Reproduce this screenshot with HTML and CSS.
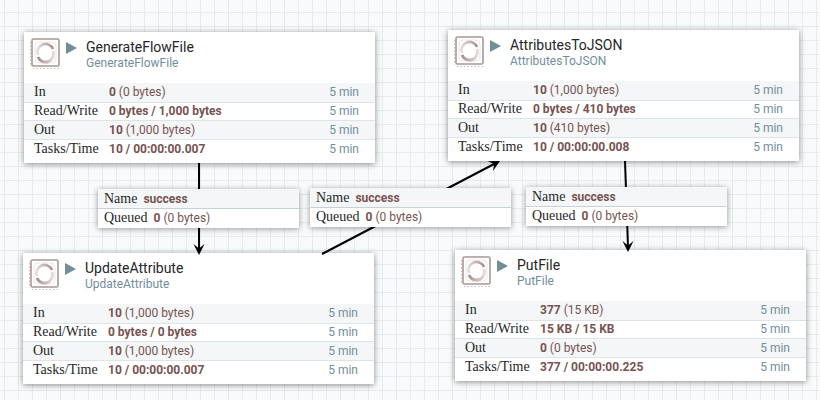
FILE: index.html
```html
<!DOCTYPE html>
<html lang="en">
<head>
	<meta charset="UTF-8">
	<title>Flow</title>
	<link rel="stylesheet" href="styles.css">
</head>
<body>
	<div class="canvas">
		<svg class="defs" width="0" height="0">
			<defs>
				<linearGradient id="arc1" x1="0" x2="1" y1="0" y2="0">
					<stop offset="0" stop-color="#a88f8e"/>
					<stop offset="1" stop-color="#e4dddc"/>
				</linearGradient>
				<linearGradient id="arc2" x1="0" x2="1" y1="0" y2="0">
					<stop offset="0" stop-color="#e4dddc"/>
					<stop offset="1" stop-color="#a88f8e"/>
				</linearGradient>
				<g id="chip">
					<path d="M0.5 4V29M3 30.5H29" fill="none" stroke="#c9bcbb" stroke-width="1" stroke-dasharray="1.5 2"/>
					<rect x="2" y="1" width="27" height="27" fill="#fff" stroke="#ab9796" stroke-width="1.6" rx="1.5"/>
					<rect x="5" y="4" width="21" height="21" fill="none" stroke="#ece7e7" stroke-width="1" rx="4"/>
					<path d="M8 17A8 8 0 0 1 23 11" fill="none" stroke="url(#arc2)" stroke-width="2.6"/>
					<path d="M23 13A8 8 0 0 1 8 19" fill="none" stroke="url(#arc1)" stroke-width="3"/>
				</g>
				<path id="head" d="M-5.5 -11 L0 0 L5.5 -11 L0 -6.5 Z" fill="#000"/>
			</defs>
		</svg>

		<div class="card pos-gen">
			<div class="head">
				<svg class="chip" viewBox="0 0 31 31"><use href="#chip"/></svg>
				<span class="play"></span>
				<div>
					<div class="title">GenerateFlowFile</div>
					<div class="sub">GenerateFlowFile</div>
				</div>
			</div>
			<div class="row"><span class="k">In</span><span class="v"><b>0</b> (0 bytes)</span><span class="t">5 min</span></div>
			<div class="row"><span class="k">Read/Write</span><span class="v"><b>0 bytes / 1,000 bytes</b></span><span class="t">5 min</span></div>
			<div class="row"><span class="k">Out</span><span class="v"><b>10</b> (1,000 bytes)</span><span class="t">5 min</span></div>
			<div class="row"><span class="k">Tasks/Time</span><span class="v"><b>10 / 00:00:00.007</b></span><span class="t">5 min</span></div>
		</div>

		<div class="card pos-json">
			<div class="head">
				<svg class="chip" viewBox="0 0 31 31"><use href="#chip"/></svg>
				<span class="play"></span>
				<div>
					<div class="title">AttributesToJSON</div>
					<div class="sub">AttributesToJSON</div>
				</div>
			</div>
			<div class="row"><span class="k">In</span><span class="v"><b>10</b> (1,000 bytes)</span><span class="t">5 min</span></div>
			<div class="row"><span class="k">Read/Write</span><span class="v"><b>0 bytes / 410 bytes</b></span><span class="t">5 min</span></div>
			<div class="row"><span class="k">Out</span><span class="v"><b>10</b> (410 bytes)</span><span class="t">5 min</span></div>
			<div class="row"><span class="k">Tasks/Time</span><span class="v"><b>10 / 00:00:00.008</b></span><span class="t">5 min</span></div>
		</div>

		<div class="card pos-upd">
			<div class="head">
				<svg class="chip" viewBox="0 0 31 31"><use href="#chip"/></svg>
				<span class="play"></span>
				<div>
					<div class="title">UpdateAttribute</div>
					<div class="sub">UpdateAttribute</div>
				</div>
			</div>
			<div class="row"><span class="k">In</span><span class="v"><b>10</b> (1,000 bytes)</span><span class="t">5 min</span></div>
			<div class="row"><span class="k">Read/Write</span><span class="v"><b>0 bytes / 0 bytes</b></span><span class="t">5 min</span></div>
			<div class="row"><span class="k">Out</span><span class="v"><b>10</b> (1,000 bytes)</span><span class="t">5 min</span></div>
			<div class="row"><span class="k">Tasks/Time</span><span class="v"><b>10 / 00:00:00.007</b></span><span class="t">5 min</span></div>
		</div>

		<div class="card pos-put">
			<div class="head">
				<svg class="chip" viewBox="0 0 31 31"><use href="#chip"/></svg>
				<span class="play"></span>
				<div>
					<div class="title">PutFile</div>
					<div class="sub">PutFile</div>
				</div>
			</div>
			<div class="row"><span class="k">In</span><span class="v"><b>377</b> (15 KB)</span><span class="t">5 min</span></div>
			<div class="row"><span class="k">Read/Write</span><span class="v"><b>15 KB / 15 KB</b></span><span class="t">5 min</span></div>
			<div class="row"><span class="k">Out</span><span class="v"><b>0</b> (0 bytes)</span><span class="t">5 min</span></div>
			<div class="row"><span class="k">Tasks/Time</span><span class="v"><b>377 / 00:00:00.225</b></span><span class="t">5 min</span></div>
		</div>

		<svg class="lines" width="820" height="400">
			<g stroke="#000" stroke-width="2" fill="none">
				<path d="M199 163V250"/>
				<path d="M322 254L496 163"/>
				<path d="M625 161L628 247"/>
			</g>
			<use href="#head" transform="translate(199 255)"/>
			<use href="#head" transform="translate(500 161) rotate(-118)"/>
			<use href="#head" transform="translate(628 252)"/>
		</svg>

		<div class="label pos-l1">
			<div class="lrow"><span class="lk">Name</span><b>success</b></div>
			<div class="lrow"><span class="lk">Queued</span><span class="v"><b>0</b> (0 bytes)</span></div>
		</div>
		<div class="label pos-l2">
			<div class="lrow"><span class="lk">Name</span><b>success</b></div>
			<div class="lrow"><span class="lk">Queued</span><span class="v"><b>0</b> (0 bytes)</span></div>
		</div>
		<div class="label pos-l3">
			<div class="lrow"><span class="lk">Name</span><b>success</b></div>
			<div class="lrow"><span class="lk">Queued</span><span class="v"><b>0</b> (0 bytes)</span></div>
		</div>
	</div>
</body>
</html>
```
FILE: styles.css
```css
*{
	margin: 0;
	padding: 0;
	box-sizing: border-box;
}
body{
	width: 820px;
	height: 400px;
	overflow: hidden;
	font-family: Roboto, sans-serif;
}
.canvas{
	width: 820px;
	height: 400px;
	position: relative;
	overflow: hidden;
	background-color: #f9fafb;
	background-image:
		linear-gradient(#e6ebed 1px, transparent 1px),
		linear-gradient(90deg, #e6ebed 1px, transparent 1px);
	background-size: 14px 14px;
	background-position: 4px 12px;
}
.lines{
	position: absolute;
	left: 0;
	top: 0;
}
.defs{
	position: absolute;
}
.card{
	width: 351px;
	height: 131px;
	position: absolute;
	background-color: #fff;
	box-shadow: 0 1px 6px rgba(0,0,0,.45);
}
.pos-gen{ left: 24px; top: 32px; }
.pos-json{ left: 448px; top: 30px; }
.pos-upd{ left: 23px; top: 253px; }
.pos-put{ left: 455px; top: 250px; }
.head{
	height: 51px;
	display: flex;
	padding: 6px 0 0 6px;
}
.chip{
	width: 31px;
	height: 31px;
	flex: none;
}
.play{
	width: 0;
	height: 0;
	margin: 4px 9px 0 5px;
	border-left: 11px solid #728e9b;
	border-top: 6px solid transparent;
	border-bottom: 6px solid transparent;
}
.title{
	font-size: 14px;
	line-height: 17px;
	margin-top: 1px;
	color: #262626;
}
.sub{
	font-size: 12px;
	line-height: 15px;
	color: #728e9b;
}
.row{
	height: 18.67px;
	display: flex;
	align-items: center;
	padding-left: 10px;
	font-size: 12px;
	background-color: #fff;
	border-top: 1px solid #dde4e7;
}
.row:nth-child(2){
	border-top: 0;
}
.row:nth-child(even){
	background-color: #f4f6f7;
}
.k, .lk{
	font-family: "Liberation Serif", serif;
	font-size: 14px;
	color: #262626;
}
.k{
	width: 75px;
}
.v{
	color: #775351;
	flex: 1;
	font-size: 12px;
}
b{
	color: #775351;
	font-size: 12px;
	font-weight: 700;
}
.t{
	color: #728e9b;
	padding-right: 16px;
	font-size: 12px;
}
.label{
	width: 201px;
	height: 39px;
	position: absolute;
	background-color: #fff;
	box-shadow: 0 1px 6px rgba(0,0,0,.4);
}
.pos-l1{ left: 98px; top: 189px; }
.pos-l2{ left: 310px; top: 188px; }
.pos-l3{ left: 526px; top: 187px; }
.lrow{
	height: 18px;
	display: flex;
	align-items: center;
	padding-left: 6px;
	gap: 6px;
}
.lrow:first-child{
	height: 20px;
	background-color: #f4f6f7;
	border-bottom: 1px solid #c7d2d7;
}
```
